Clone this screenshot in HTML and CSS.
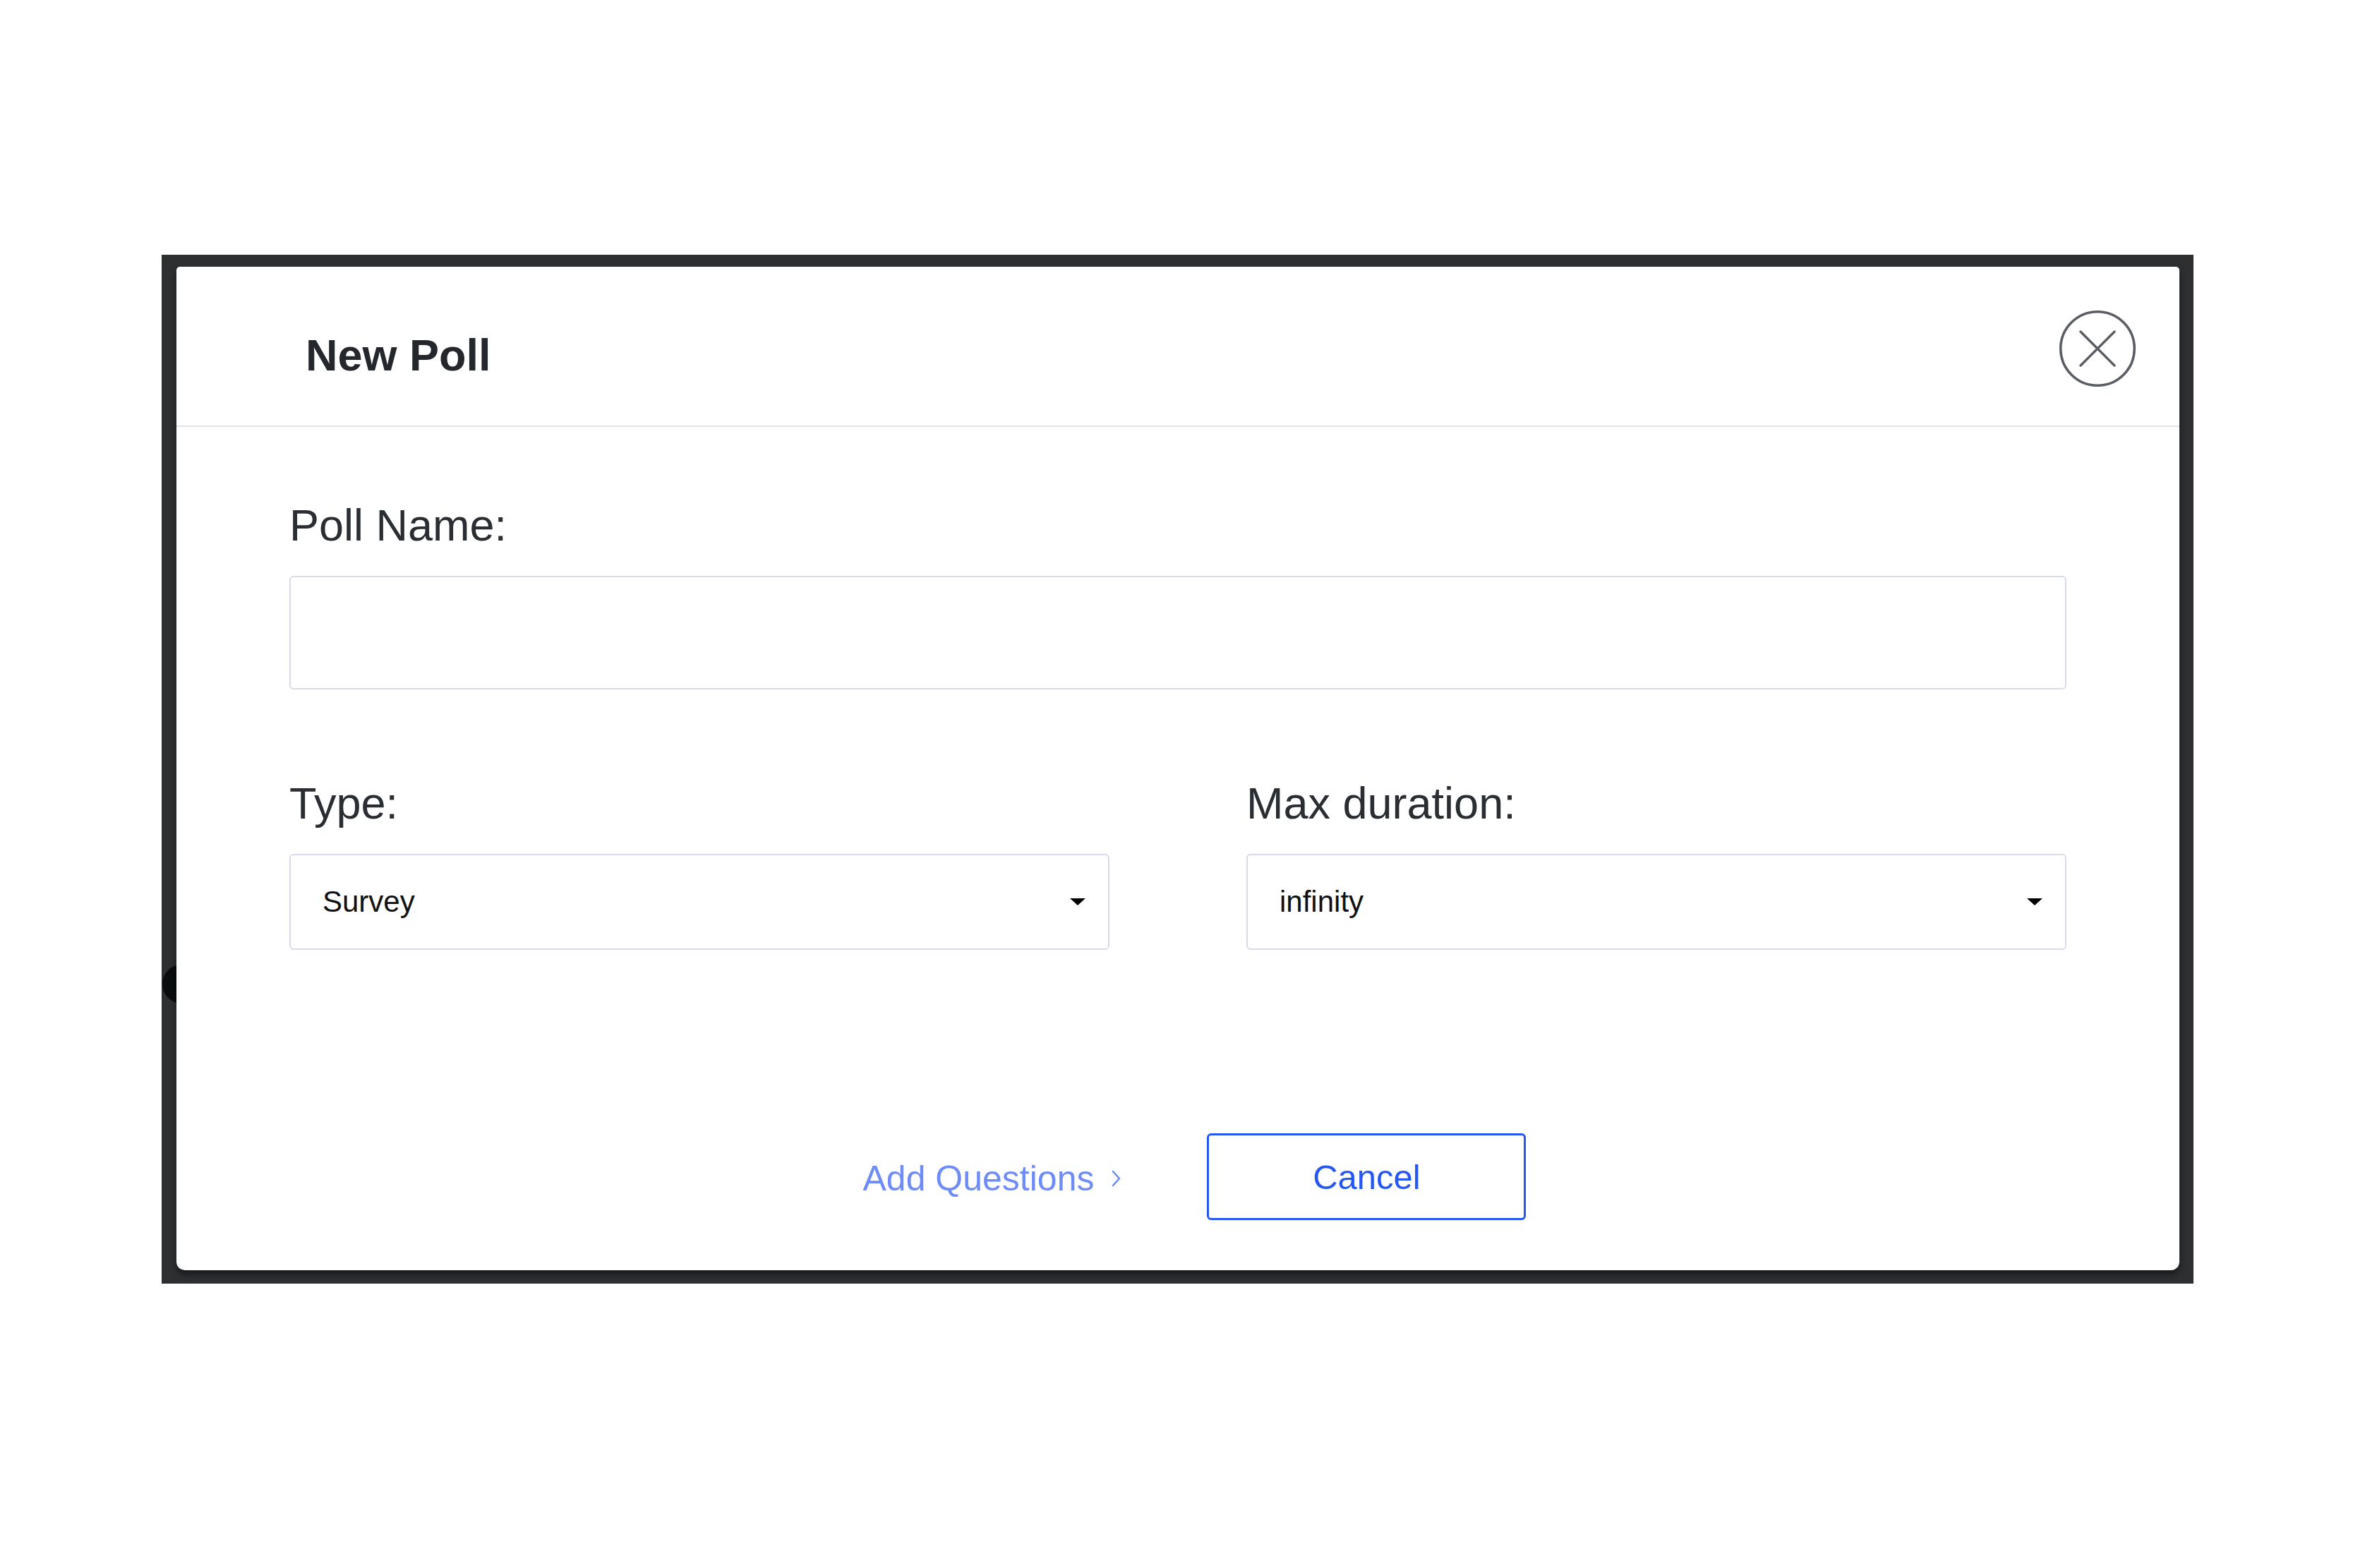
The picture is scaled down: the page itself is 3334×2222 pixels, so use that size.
FILE: index.html
```html
<!DOCTYPE html>
<html lang="en">
<head>
    <meta charset="UTF-8">
    <meta name="viewport" content="width=device-width, initial-scale=1.0">
    <title>New Poll</title>
    <link rel="stylesheet" href="styles.css">
</head>
<body>

    <div class="frame">
        <span class="stray-dot"></span>

        <div class="modal">
            <div class="modal-header">
                <h2 class="modal-title">New Poll</h2>
                <button class="close-btn" aria-label="Close">
                    <svg width="110" height="110" viewBox="0 0 110 110">
                        <circle cx="55" cy="55" r="52.3" fill="none" stroke="#5a5d63" stroke-width="3.6"/>
                        <path d="M31 31 L79 79 M79 31 L31 79" stroke="#5a5d63" stroke-width="3.4" stroke-linecap="round"/>
                    </svg>
                </button>
            </div>

            <div class="modal-body">
                <label class="field-label" for="poll-name">Poll Name:</label>
                <input class="text-input" id="poll-name" type="text">

                <div class="field-row">
                    <div class="field">
                        <label class="field-label">Type:</label>
                        <div class="select-box">
                            <span>Survey</span>
                            <span class="caret"></span>
                        </div>
                    </div>
                    <div class="field">
                        <label class="field-label">Max duration:</label>
                        <div class="select-box">
                            <span>infinity</span>
                            <span class="caret"></span>
                        </div>
                    </div>
                </div>
            </div>

            <div class="modal-footer">
                <a href="#" class="link-next">Add Questions
                    <svg width="17" height="26" viewBox="0 0 17 26">
                        <polyline points="4,3 13,13 4,23" fill="none" stroke="#6f8cf6" stroke-width="2.6" stroke-linecap="round" stroke-linejoin="round"/>
                    </svg>
                </a>
                <button class="btn-cancel">Cancel</button>
            </div>
        </div>
    </div>

</body>
</html>
```

FILE: styles.css
```css
* {
    box-sizing: border-box;
}
body {
    margin: 0;
    padding: 361px 0 0 229px;
    background: #fff;
    font-family: 'Liberation Sans', Arial, sans-serif;
}
.frame {
    position: relative;
    width: 2879px;
    padding: 17px 20px 19px 21px;
    background: #2e2f31; /* fundo escuro atras do modal */
}
.stray-dot {
    position: absolute;
    left: 1px;
    top: 1006px;
    width: 55px;
    height: 55px;
    border-radius: 50%;
    background: #0b0c0e;
}
.modal {
    position: relative;
    z-index: 1;
    background: #fff;
    border-radius: 5px 5px 12px 12px;
    box-shadow: 0 6px 10px rgba(0, 0, 0, 0.45);
}
.modal-header {
    height: 227px;
    display: flex;
    align-items: center;
    justify-content: space-between;
    padding: 0 61px 0 183px;
    border-bottom: 2px solid #e3e3e3;
}
.modal-title {
    margin: 0;
    padding-top: 24px;
    font-size: 63px;
    line-height: 70px;
    font-weight: 700;
    color: #24282c;
}
.close-btn {
    width: 110px;
    height: 110px;
    margin-top: 7px;
    padding: 0;
    border: none;
    background: none;
    cursor: pointer;
}
.close-btn svg {
    display: block;
}
.modal-body {
    padding: 104px 160px 0;
}
.field-label {
    display: block;
    margin-bottom: 37px;
    font-size: 63px;
    line-height: 70px;
    color: #2a2e33;
}
.text-input {
    display: block;
    width: 100%;
    height: 161px;
    padding: 0 40px;
    border: 2px solid #d8dae8;
    border-radius: 6px;
    font-family: inherit;
    font-size: 42px;
    outline: none;
}
.field-row {
    display: grid;
    grid-template-columns: 1fr 1fr;
    column-gap: 194px;
    margin-top: 126px;
}
.select-box {
    height: 136px;
    display: flex;
    align-items: center;
    justify-content: space-between;
    padding: 0 32px 0 45px;
    border: 2px solid #d8dae8;
    border-radius: 6px;
    font-size: 42px;
    color: #111;
}
.caret {
    width: 0;
    height: 0;
    border-left: 11px solid transparent;
    border-right: 11px solid transparent;
    border-top: 10px solid #000;
}
.modal-footer {
    display: flex;
    justify-content: center;
    align-items: center;
    padding: 260px 0 71px;
}
.link-next {
    display: flex;
    align-items: center;
    gap: 23px;
    margin: 4px 120px 0 47px;
    font-size: 50px;
    color: #6f8cf6;
    text-decoration: none;
}
.btn-cancel {
    width: 452px;
    height: 123px;
    border: 3px solid #2757f2;
    border-radius: 6px;
    background: #fff;
    color: #2757f2;
    font-family: inherit;
    font-size: 49px;
    cursor: pointer;
}
```
